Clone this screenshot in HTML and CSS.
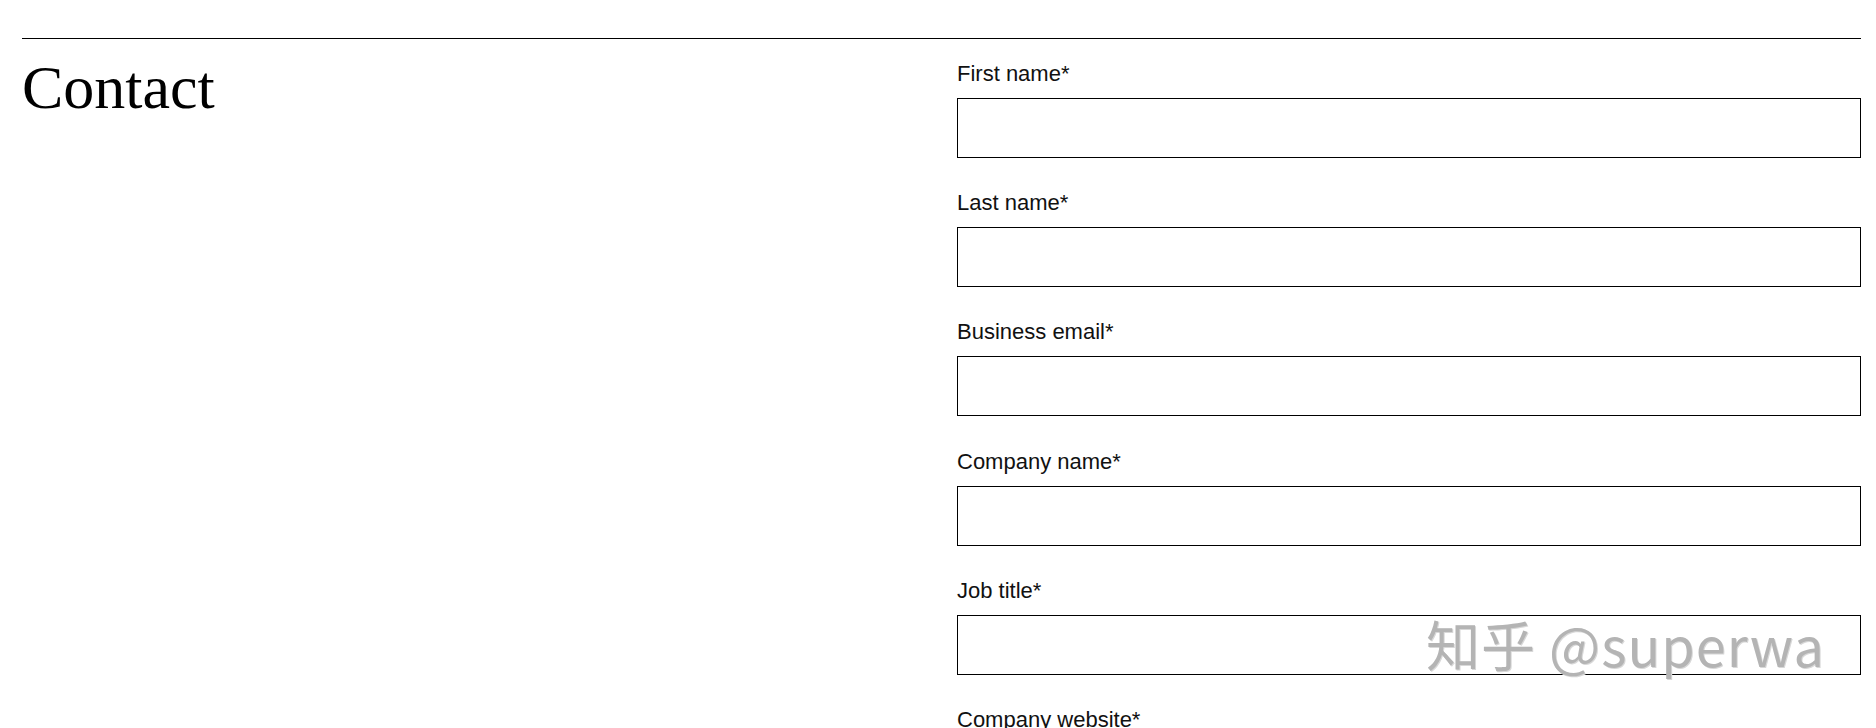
FILE: index.html
```html
<!DOCTYPE html>
<html lang="en">
<head>
<meta charset="utf-8">
<title>Contact</title>
<link rel="stylesheet" href="styles.css">
</head>
<body>
<main class="page">
  <section class="contact">
    <h1 class="title">Contact</h1>
    <form class="form">
      <div class="field">
        <label class="label" for="f1">First name*</label>
        <input class="input" id="f1" type="text">
      </div>
      <div class="field">
        <label class="label" for="f2">Last name*</label>
        <input class="input" id="f2" type="text">
      </div>
      <div class="field">
        <label class="label" for="f3">Business email*</label>
        <input class="input" id="f3" type="email">
      </div>
      <div class="field">
        <label class="label" for="f4">Company name*</label>
        <input class="input" id="f4" type="text">
      </div>
      <div class="field">
        <label class="label" for="f5">Job title*</label>
        <input class="input" id="f5" type="text">
      </div>
      <div class="field">
        <label class="label" for="f6">Company website*</label>
        <input class="input" id="f6" type="text">
      </div>
    </form>
  </section>
</main>
<div class="watermark">知乎 @superwa</div>
</body>
</html>
```
FILE: styles.css
```css
html, body {
  margin: 0;
  padding: 0;
  background: #fff;
  color: #000;
}
body {
  overflow: hidden;
  height: 728px;
}
.page {
  margin: 38px 15px 0 22px;
}
.contact {
  border-top: 1px solid #000;
  display: grid;
  grid-template-columns: 935px 1fr;
  padding-top: 21px;
}
.title {
  margin: 0;
  font-family: "Liberation Serif", "Times New Roman", serif;
  font-weight: 400;
  font-size: 62px;
  line-height: 54px;
  letter-spacing: 0;
}
.form {
  display: flex;
  flex-direction: column;
  gap: 31.2px;
}
.field {
  display: flex;
  flex-direction: column;
  gap: 10px;
}
.label {
  font-family: "Liberation Sans", Arial, sans-serif;
  font-size: 22px;
  line-height: 28px;
  color: #111;
}
.input {
  box-sizing: border-box;
  height: 60px;
  width: 100%;
  margin: 0;
  border: 1px solid #000;
  border-radius: 0;
  background: #fff;
  padding: 0 12px;
  font-family: "Liberation Sans", Arial, sans-serif;
  font-size: 20px;
  outline: none;
}
.watermark {
  position: absolute;
  left: 1426px;
  top: 606px;
  font-family: "Noto Sans CJK SC", "Noto Sans", sans-serif;
  font-size: 54px;
  line-height: 76px;
  letter-spacing: 1px;
  color: #b4b4b4;
  text-shadow: 1px 1px 0 #d8d8d8;
  pointer-events: none;
  white-space: nowrap;
}
```
